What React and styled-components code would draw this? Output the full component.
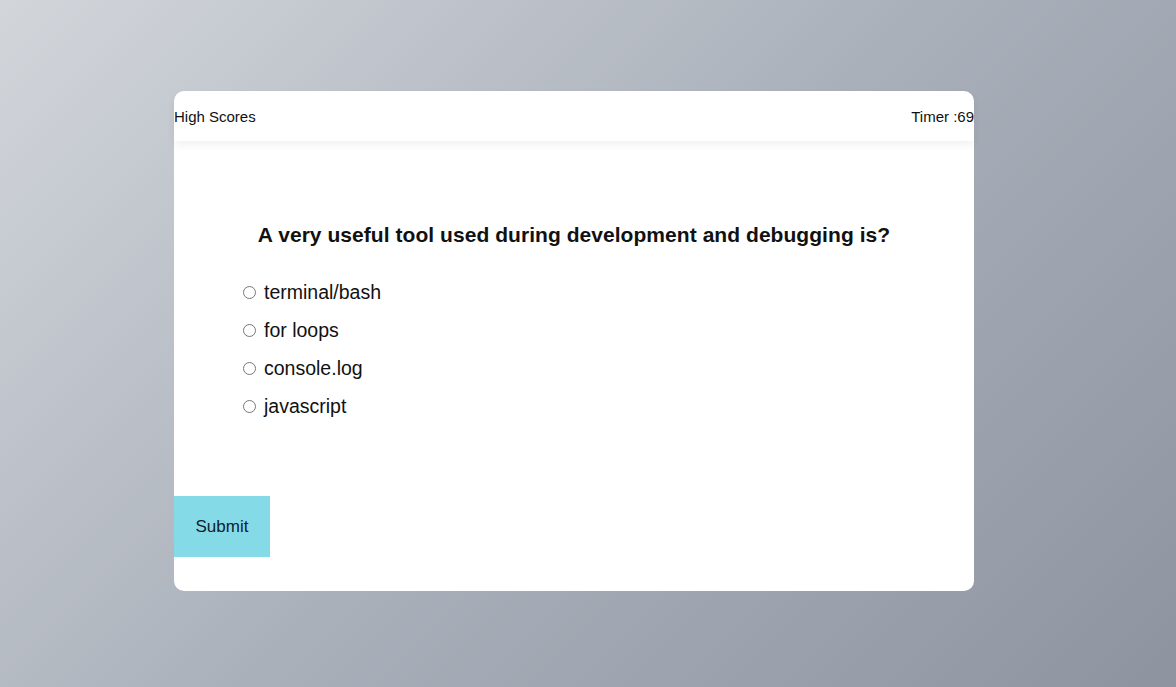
import React, { useState } from 'react'
import styled, { createGlobalStyle } from 'styled-components'

const GlobalStyle = createGlobalStyle`
  html, body {
    margin: 0;
    height: 100%;
  }
  body {
    font-family: "Liberation Sans", Arial, sans-serif;
    background: linear-gradient(135deg, #d2d6db 0%, #aab0ba 50%, #8d94a0 100%);
    background-attachment: fixed;
    min-height: 687px;
  }
`

const Page = styled.div`
  padding: 91px 0 0 174px;
`

const Card = styled.div`
  width: 800px;
  height: 500px;
  background: #fff;
  border-radius: 10px;
  display: flex;
  flex-direction: column;
`

const Header = styled.header`
  height: 50px;
  display: flex;
  align-items: center;
  justify-content: space-between;
  border-radius: 10px 10px 0 0;
  box-shadow: 0 4px 8px rgba(0, 0, 0, 0.06);
  font-size: 15px;
  padding-top: 1px;
  box-sizing: border-box;
  color: #111;
`

const Body = styled.main`
  flex: 1;
  display: flex;
  flex-direction: column;
`

const Question = styled.h2`
  margin: 82px 0 0;
  text-align: center;
  font-size: 21px;
  font-weight: bold;
  letter-spacing: 0.05px;
  color: #111;
`

const Options = styled.div`
  display: flex;
  flex-direction: column;
  gap: 16px;
  margin: 34px 0 0 69px;
`

const Option = styled.label`
  display: flex;
  align-items: center;
  gap: 8px;
  font-size: 19.5px;
  height: 22px;
  color: #111;
  cursor: pointer;

  input {
    margin: 0;
    width: 13px;
    height: 13px;
  }
`

const Submit = styled.button`
  margin-top: auto;
  margin-bottom: 34px;
  align-self: flex-start;
  width: 96px;
  height: 61px;
  border: none;
  background: #84dbe7;
  font-family: inherit;
  font-size: 17px;
  color: #102030;
  cursor: pointer;
`

const answers = ['terminal/bash', 'for loops', 'console.log', 'javascript']

export default function App() {
  const [picked, setPicked] = useState(null)
  return (
    <Page>
      <GlobalStyle />
      <Card>
        <Header>
          <span>High Scores</span>
          <span>Timer :69</span>
        </Header>
        <Body>
          <Question>A very useful tool used during development and debugging is?</Question>
          <Options>
            {answers.map((a) => (
              <Option key={a}>
                <input
                  type="radio"
                  name="answer"
                  checked={picked === a}
                  onChange={() => setPicked(a)}
                />
                {a}
              </Option>
            ))}
          </Options>
          <Submit>Submit</Submit>
        </Body>
      </Card>
    </Page>
  )
}
